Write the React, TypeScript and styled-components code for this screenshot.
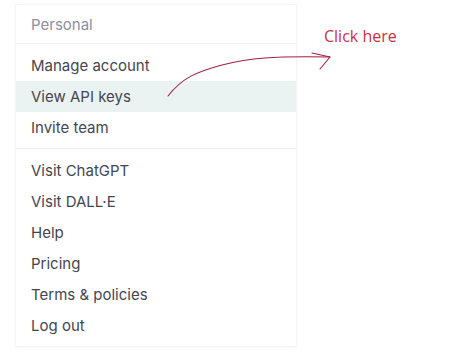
import styled, { createGlobalStyle } from 'styled-components';

const GlobalStyle = createGlobalStyle`
	html, body {
		margin: 0;
		padding: 0;
		background: #ffffff;
	}
	body {
		width: 468px;
		height: 360px;
		overflow: hidden;
		font-family: Inter, 'Noto Sans', sans-serif;
	}
`;

const personal = ['Manage account', 'View API keys', 'Invite team'];
const links = ['Visit ChatGPT', 'Visit DALL·E', 'Help', 'Pricing', 'Terms & policies', 'Log out'];

export default function App() {
	return (
		<>
			<GlobalStyle />
			<Page>
				<Menu>
					<Header>Personal</Header>
					<Group>
						{personal.map((label) => (
							<Item key={label} $active={label === 'View API keys'}>
								{label}
							</Item>
						))}
					</Group>
					<Group>
						{links.map((label) => (
							<Item key={label}>{label}</Item>
						))}
					</Group>
				</Menu>
				<Note>Click here</Note>
				<Arrow width="468" height="360" viewBox="0 0 468 360">
					<path
						d="M168 96 C 182 78, 196 72, 222 65 C 250 58, 272 56, 330 57"
						fill="none"
						stroke="#a3203f"
						strokeWidth="1.1"
						strokeLinecap="round"
					/>
					<path
						d="M312 53 L330 57 L320 69"
						fill="none"
						stroke="#a3203f"
						strokeWidth="1.1"
						strokeLinecap="round"
						strokeLinejoin="round"
					/>
				</Arrow>
			</Page>
		</>
	);
}

const Page = styled.div`
	position: relative;
	width: 468px;
	height: 360px;
	padding: 4px 0 0 15px;
	box-sizing: border-box;
`;

const Menu = styled.div`
	width: 282px;
	background: #ffffff;
	border: 1px solid #f4f4f6;
	box-shadow: 0 0 5px rgba(0, 0, 0, 0.04);
	box-sizing: border-box;
`;

const Header = styled.div`
	height: 38px;
	display: flex;
	align-items: center;
	padding-left: 15px;
	font-size: 15px;
	color: #8e8ea0;
	border-bottom: 1px solid #f4f4f6;
`;

const Group = styled.div`
	display: flex;
	flex-direction: column;
	padding: 6px 0 5px;

	& + & {
		border-top: 1px solid #ececf1;
	}
`;

const Item = styled.div<{ $active?: boolean }>`
	height: 31px;
	display: flex;
	align-items: center;
	padding-left: 15px;
	font-size: 15px;
	color: #45464f;
	background: ${({ $active }) => ($active ? '#ebf2f2' : 'transparent')};
`;

const Note = styled.div`
	position: absolute;
	left: 324px;
	top: 25px;
	font-family: 'Open Sans', 'Liberation Sans', sans-serif;
	font-size: 16px;
	color: #cc2e45;
`;

const Arrow = styled.svg`
	position: absolute;
	left: 0;
	top: 0;
	pointer-events: none;
`;
